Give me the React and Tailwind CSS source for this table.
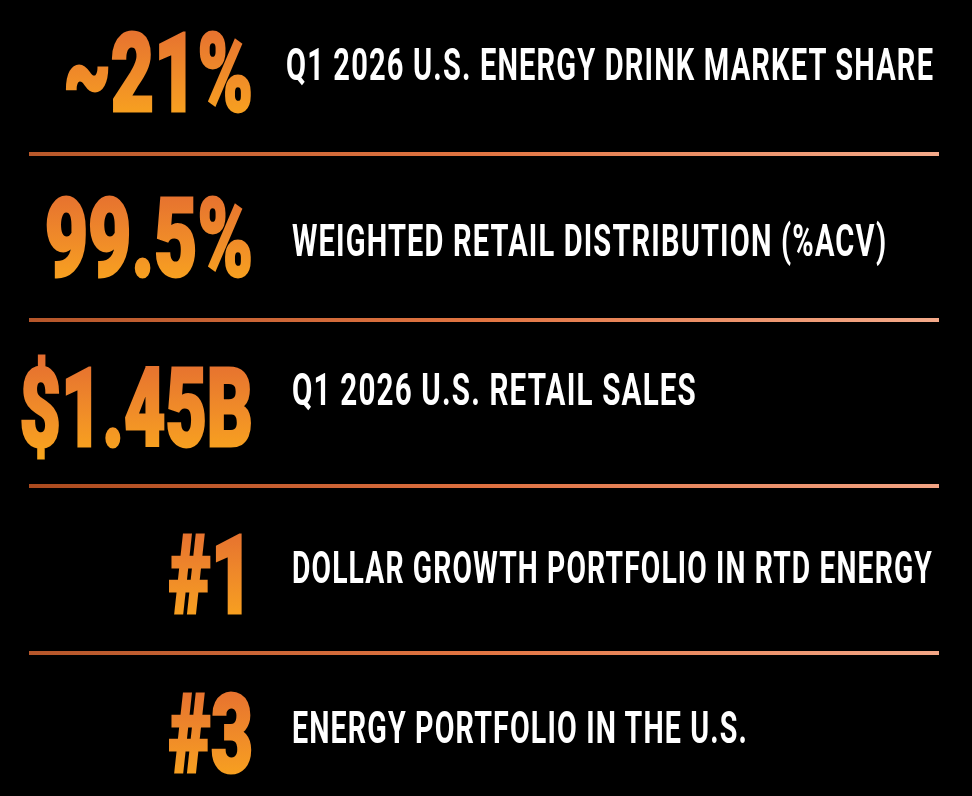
const stats = [
  {
    value: "~21%",
    label: "Q1 2026 U.S. ENERGY DRINK MARKET SHARE",
    row: "h-[152px]",
    valueTop: "mt-[20px]",
    valueSize: "text-[74.8px] scale-y-[1.4706]",
    labelTop: "mt-[44px] ml-[33px]",
    labelSize: "text-[29.04px] scale-y-[1.5152]",
  },
  {
    value: "99.5%",
    label: "WEIGHTED RETAIL DISTRIBUTION (%ACV)",
    row: "h-[162px]",
    valueTop: "mt-[29px]",
    valueSize: "text-[74.8px] scale-y-[1.4706]",
    labelTop: "mt-[64px] ml-[39px]",
    labelSize: "text-[29.04px] scale-y-[1.5152]",
  },
  {
    value: "$1.45B",
    label: "Q1 2026 U.S. RETAIL SALES",
    row: "h-[162px]",
    valueTop: "mt-[32px]",
    valueSize: "text-[71.5px] scale-y-[1.5385]",
    labelTop: "mt-[47px] ml-[39px]",
    labelSize: "text-[29.57px] scale-y-[1.4881]",
  },
  {
    value: "#1",
    label: "DOLLAR GROWTH PORTFOLIO IN RTD ENERGY",
    row: "h-[163px]",
    valueTop: "mt-[34px]",
    valueSize: "text-[72.6px] scale-y-[1.5152]",
    labelTop: "mt-[59px] ml-[39px]",
    labelSize: "text-[28.29px] scale-y-[1.5552]",
  },
  {
    value: "#3",
    label: "ENERGY PORTFOLIO IN THE U.S.",
    row: "h-[140px]",
    valueTop: "mt-[26px]",
    valueSize: "text-[72.6px] scale-y-[1.5152]",
    labelTop: "mt-[51px] ml-[39px]",
    labelSize: "text-[28.64px] scale-y-[1.5361]",
  },
];

const lineColors = [
  "from-[#b8582a] via-[#e27542] to-[#f4aa8a]",
  "from-[#b5562a] via-[#e27542] to-[#f4aa8a]",
  "from-[#aa4a1e] via-[#de7040] to-[#f2a484]",
  "from-[#b5562a] via-[#e27542] to-[#f2a686]",
];

function StatRow({ stat }) {
  return (
    <div className={`flex items-start shrink-0 ${stat.row}`}>
      <div className={`w-[253px] shrink-0 flex justify-end ${stat.valueTop}`}>
        <span
          className={`inline-block origin-top whitespace-nowrap leading-none font-black [-webkit-text-stroke:2px_transparent] bg-linear-to-b from-[#e46c30] to-[#faa919] bg-clip-text text-transparent ${stat.valueSize}`}
        >
          {stat.value}
        </span>
      </div>
      <div className={`min-w-0 ${stat.labelTop}`}>
        <span
          className={`inline-block origin-top whitespace-nowrap leading-none font-bold tracking-[0.04em] text-white ${stat.labelSize}`}
        >
          {stat.label}
        </span>
      </div>
    </div>
  );
}

export default function App() {
  return (
    <div
      className="min-h-screen bg-black flex flex-col"
      style={{ fontFamily: 'Roboto, "Liberation Sans", sans-serif' }}
    >
      {stats.map((stat, i) => (
        <div key={stat.value} className="flex flex-col">
          <StatRow stat={stat} />
          {i < lineColors.length && (
            <div className={`ml-[29px] w-[910px] h-1 shrink-0 bg-linear-to-r ${lineColors[i]}`} />
          )}
        </div>
      ))}
    </div>
  );
}
